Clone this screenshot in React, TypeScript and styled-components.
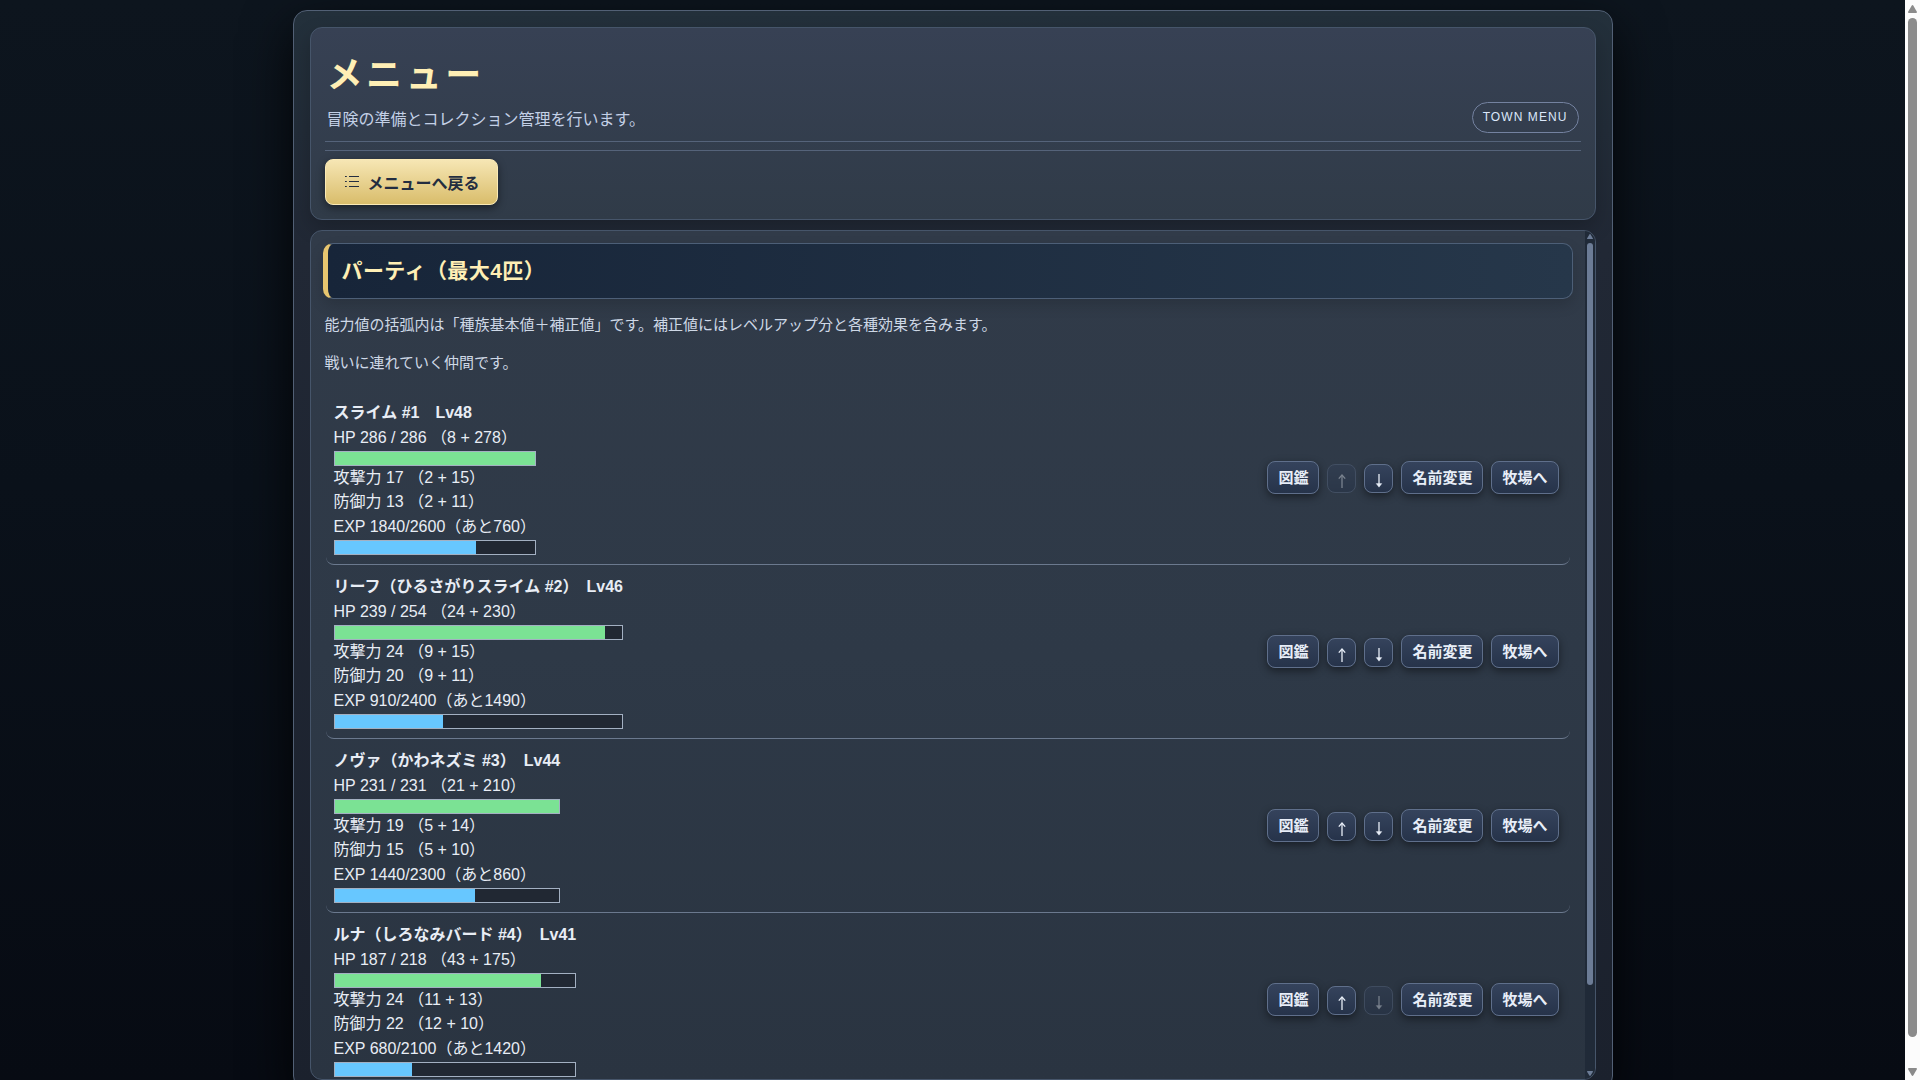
import React from "react";
import styled, { createGlobalStyle } from "styled-components";

const GlobalStyle = createGlobalStyle`
  *, *::before, *::after { box-sizing: border-box; }
  body {
    margin: 0;
    background: #070c13;
    color: #e8edf5;
    font-family: "Liberation Sans", "Noto Sans CJK JP", sans-serif;
    font-size: 16px;
    line-height: 24px;
  }
  h1, h2, p, ul { margin: 0; padding: 0; }
  button { font-family: inherit; cursor: pointer; }
`;

const Page = styled.div`
  display: flex;
  height: 100vh;
  overflow: hidden;
  background: linear-gradient(180deg, #0d151e 0%, #0a111a 45%, #070b13 100%);
`;

const Stage = styled.div`
  flex: 1;
  min-width: 0;
  padding: 10px 16px 0;
`;

const Shell = styled.main`
  max-width: 1320px;
  height: 100vh;
  margin: 0 auto;
  padding: 16px;
  display: flex;
  flex-direction: column;
  gap: 10px;
  border: 1px solid #526075;
  border-radius: 14px;
  background: linear-gradient(180deg, #23303b 0%, #212835 22%, #1b212d 100%);
  box-shadow: 0 18px 50px rgba(0, 0, 0, 0.8);
`;

const Header = styled.header`
  flex: none;
  padding: 14px;
  border: 1px solid #46556a;
  border-radius: 12px;
  background: linear-gradient(180deg, #374154 0%, #303b48 100%);
  box-shadow: 0 8px 20px rgba(0, 0, 0, 0.2);
`;

const TitleBar = styled.div`
  display: flex;
  justify-content: space-between;
  align-items: flex-end;
  padding: 4px 2px 8px;
  border-bottom: 1px solid #55637a;
`;

const Title = styled.h1`
  color: #ffefb5;
  font-size: 36px;
  line-height: 60px;
  font-weight: 700;
  letter-spacing: 0.1em;
`;

const Lead = styled.p`
  color: #c3d0e6;
  font-size: 16px;
  line-height: 27px;
`;

const Badge = styled.span`
  padding: 0 10px;
  border: 1px solid #7482a0;
  border-radius: 16px;
  color: #dce8fa;
  font-size: 12px;
  line-height: 29px;
  letter-spacing: 0.09em;
`;

const Nav = styled.nav`
  margin-top: 8px;
  padding-top: 8px;
  border-top: 1px solid #55637a;
`;

const BackButton = styled.button`
  display: flex;
  align-items: center;
  gap: 9px;
  height: 46px;
  padding: 0 17px 1px 19px;
  border: 1px solid #fbeab5;
  border-radius: 8px;
  background: linear-gradient(180deg, #f6e6b4 0%, #d9bd6b 100%);
  box-shadow: 0 3px 8px rgba(0, 0, 0, 0.45);
  color: #232d40;
  font-size: 16px;
  font-weight: 700;
`;

const Panel = styled.section`
  flex: none;
  height: calc(100vh - 230px);
  display: flex;
  overflow: hidden;
  border: 1px solid #46556a;
  border-radius: 12px;
  background: linear-gradient(180deg, #313b49 0%, #2e3947 50%, #2a3441 100%);
`;

const PanelBody = styled.div`
  flex: 1;
  min-width: 0;
  padding: 12px;
`;

const SectionTitle = styled.h2`
  padding: 0 14px;
  border: 1px solid #4d5f77;
  border-left: 5px solid #e8c66f;
  border-radius: 10px;
  background: linear-gradient(90deg, #172539 0%, #26374a 100%);
  box-shadow: 0 6px 14px rgba(0, 0, 0, 0.15);
  color: #ffefb5;
  font-size: 21px;
  line-height: 54px;
  font-weight: 700;
  letter-spacing: 0.02em;
`;

const Note = styled.p`
  margin-top: 14px;
  padding: 0 2px;
  color: #ced8e6;
  font-size: 15px;
  line-height: 24px;
`;

const MonsterList = styled.ul`
  margin: 16px 3px 0;
  list-style: none;
`;

const MonsterRow = styled.li`
  display: flex;
  justify-content: space-between;
  align-items: center;
  padding: 9px 11px 9px 8px;
  border-bottom: 1px solid #6b798e;
  border-radius: 8px;
`;

const Info = styled.div`
  display: flex;
  flex-direction: column;
`;

const Name = styled.strong`
  line-height: 25px;
  font-weight: 700;
`;

const Points = styled.span`
  line-height: 25px;
`;

const Stat = styled.span`
  line-height: 24px;
`;

const Track = styled.div`
  height: 15px;
  margin-top: 1px;
  border: 1px solid #a3b0c2;
  background: #212833;
`;

const Fill = styled.div<{ $color: string }>`
  height: 100%;
  background: ${(p) => p.$color};
`;

const Actions = styled.div`
  display: flex;
  align-items: center;
  gap: 8px;
`;

const ActionButton = styled.button`
  height: 33px;
  padding: 0 10px;
  border: 1px solid #5f6f8b;
  border-radius: 8px;
  background: linear-gradient(180deg, #35435c 0%, #26334a 100%);
  box-shadow: 0 3px 8px rgba(0, 0, 0, 0.45);
  color: #e8eef8;
  font-size: 15px;
  line-height: 24px;
  font-weight: 700;
`;

const MoveButton = styled(ActionButton)`
  width: 29px;
  height: 29px;
  margin-top: 2px;
  padding: 4px 0 0;
  display: grid;
  place-items: center;

  &:disabled {
    opacity: 0.4;
    box-shadow: none;
    cursor: default;
  }
`;

const PanelRail = styled.div`
  width: 10px;
  padding: 3px 2px;
  display: flex;
  flex-direction: column;
  align-items: center;
  gap: 4px;
  background: #202a38;
  color: #6c7c96;
`;

const PageRail = styled.div`
  width: 15px;
  padding: 5px 3px 4px;
  display: flex;
  flex-direction: column;
  align-items: center;
  gap: 5px;
  background: #fcfcfc;
  color: #8b8b8b;
`;

const Groove = styled.div`
  flex: 1;
  width: 100%;
`;

const Thumb = styled.div<{ $share: number }>`
  height: ${(p) => p.$share}%;
  border-radius: 5px;
  background: currentColor;
`;

const ListIcon = () => (
  <svg width="14" height="14" viewBox="0 0 14 14" fill="none" stroke="currentColor" strokeWidth="1.2" aria-hidden="true">
    <path d="M4 1.5h10M4 6.5h10M4 11.5h10" />
    <path d="M0 1.5h1.8M0 6.5h1.8M0 11.5h1.8" />
  </svg>
);

const Arrow = ({ size, down }: { size: number; down?: boolean }) => (
  <svg width={size} height={size - 1} viewBox="0 0 10 8" preserveAspectRatio="none" fill="currentColor" aria-hidden="true">
    <path d={down ? "M0 1Q0 0 1 0H9Q10 0 10 1L6 7.3Q5 8.6 4 7.3Z" : "M0 7Q0 8 1 8H9Q10 8 10 7L6 .7Q5 -.6 4 .7Z"} />
  </svg>
);

const MoveIcon = ({ down }: { down?: boolean }) => (
  <svg width="10" height="14" viewBox="0 0 10 14" fill="none" stroke="currentColor" strokeWidth="1.3" aria-hidden="true">
    <path d={down ? "M5 0V12" : "M5 14V1"} />
    <path d={down ? "M2.2 9.6H7.8L5 13.2Z" : "M1.8 4.6 5 1 8.2 4.6"} fill={down ? "currentColor" : "none"} strokeWidth={down ? 0.4 : 1.3} />
  </svg>
);

type Monster = {
  name: string;
  level: number;
  hp: [number, number];
  hpParts: string;
  attack: string;
  defense: string;
  exp: [number, number];
};

const party: Monster[] = [
  { name: "スライム #1", level: 48, hp: [286, 286], hpParts: "8 + 278", attack: "17 （2 + 15）", defense: "13 （2 + 11）", exp: [1840, 2600] },
  { name: "リーフ（ひるさがりスライム #2）", level: 46, hp: [239, 254], hpParts: "24 + 230", attack: "24 （9 + 15）", defense: "20 （9 + 11）", exp: [910, 2400] },
  { name: "ノヴァ（かわネズミ #3）", level: 44, hp: [231, 231], hpParts: "21 + 210", attack: "19 （5 + 14）", defense: "15 （5 + 10）", exp: [1440, 2300] },
  { name: "ルナ（しろなみバード #4）", level: 41, hp: [187, 218], hpParts: "43 + 175", attack: "24 （11 + 13）", defense: "22 （12 + 10）", exp: [680, 2100] },
];

const Gauge = ({ value, color }: { value: [number, number]; color: string }) => (
  <Track>
    <Fill $color={color} style={{ width: `${(value[0] / value[1]) * 100}%` }} />
  </Track>
);

export default function App() {
  return (
    <>
      <GlobalStyle />
      <Page>
        <Stage>
          <Shell>
            <Header>
              <TitleBar>
                <div>
                  <Title>メニュー</Title>
                  <Lead>冒険の準備とコレクション管理を行います。</Lead>
                </div>
                <Badge>TOWN MENU</Badge>
              </TitleBar>
              <Nav>
                <BackButton type="button">
                  <ListIcon />
                  メニューへ戻る
                </BackButton>
              </Nav>
            </Header>
            <Panel>
              <PanelBody>
                <SectionTitle>パーティ（最大4匹）</SectionTitle>
                <Note>能力値の括弧内は「種族基本値＋補正値」です。補正値にはレベルアップ分と各種効果を含みます。</Note>
                <Note>戦いに連れていく仲間です。</Note>
                <MonsterList>
                  {party.map((m, i) => (
                    <MonsterRow key={m.name}>
                      <Info>
                        <Name>{`${m.name}　Lv${m.level}`}</Name>
                        <Points>{`HP ${m.hp[0]} / ${m.hp[1]} （${m.hpParts}）`}</Points>
                        <Gauge value={m.hp} color="#7be294" />
                        <Stat>{`攻撃力 ${m.attack}`}</Stat>
                        <Stat>{`防御力 ${m.defense}`}</Stat>
                        <Points>{`EXP ${m.exp[0]}/${m.exp[1]}（あと${m.exp[1] - m.exp[0]}）`}</Points>
                        <Gauge value={m.exp} color="#67c7ff" />
                      </Info>
                      <Actions>
                        <ActionButton type="button">図鑑</ActionButton>
                        <MoveButton type="button" aria-label="上へ" disabled={i === 0}>
                          <MoveIcon />
                        </MoveButton>
                        <MoveButton type="button" aria-label="下へ" disabled={i === party.length - 1}>
                          <MoveIcon down />
                        </MoveButton>
                        <ActionButton type="button">名前変更</ActionButton>
                        <ActionButton type="button">牧場へ</ActionButton>
                      </Actions>
                    </MonsterRow>
                  ))}
                </MonsterList>
              </PanelBody>
              <PanelRail aria-hidden="true">
                <Arrow size={6} />
                <Groove>
                  <Thumb $share={90} />
                </Groove>
                <Arrow size={6} down />
              </PanelRail>
            </Panel>
          </Shell>
        </Stage>
        <PageRail aria-hidden="true">
          <Arrow size={9} />
          <Groove>
            <Thumb $share={97.5} />
          </Groove>
          <Arrow size={9} down />
        </PageRail>
      </Page>
    </>
  );
}
